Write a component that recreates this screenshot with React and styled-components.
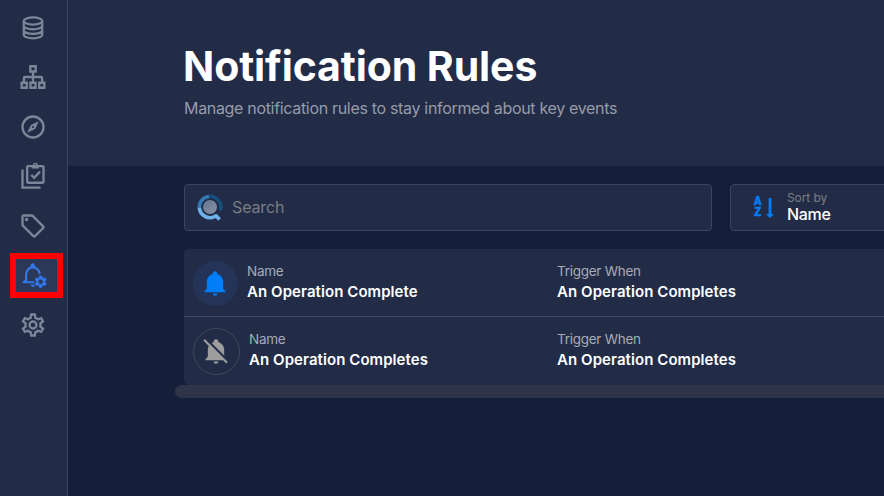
import React from "react";
import styled, { createGlobalStyle } from "styled-components";

const GlobalStyle = createGlobalStyle`
  * { box-sizing: border-box; }
  body {
    margin: 0;
    background: #161f39;
    color: #fff;
    font-family: Inter, "Open Sans", sans-serif;
    overflow: hidden;
  }
`;

const Page = styled.div`
  display: flex;
  height: 100vh;
  overflow: hidden;
`;

const Sidebar = styled.nav`
  flex: none;
  width: 68px;
  padding-top: 3px;
  background: #232c47;
  border-right: 1px solid #3b455f;
  display: flex;
  flex-direction: column;
`;

const NavItem = styled.a`
  position: relative;
  height: 49.5px;
  display: flex;
  align-items: center;
  justify-content: center;
  padding-right: 1px;
  color: ${(p) => (p.$active ? "#3377e6" : "#7d8598")};

  svg {
    display: block;
  }
`;

const Highlight = styled.span`
  position: absolute;
  left: 10px;
  top: 2px;
  width: 53px;
  height: 45px;
  border: 6px solid #fe0000;
  background: #2b3858;
`;

const NavGlyph = styled.span`
  position: relative;
`;

const Main = styled.main`
  flex: 1;
  min-width: 0;
  display: flex;
  flex-direction: column;
`;

const Header = styled.header`
  height: 166px;
  flex: none;
  padding: 41px 0 0 116px;
  background: #232c47;
`;

const Title = styled.h1`
  margin: 0 0 0 -1px;
  font-size: 41px;
  line-height: 50px;
  font-weight: 700;
  letter-spacing: -0.1px;
  white-space: nowrap;
`;

const Subtitle = styled.p`
  margin: 7px 0 0;
  font-size: 16px;
  line-height: 20px;
  letter-spacing: -0.32px;
  color: #969ba9;
  white-space: nowrap;
`;

const Toolbar = styled.div`
  display: flex;
  gap: 18px;
  padding: 18px 0 0 116px;
`;

const Field = styled.div`
  flex: none;
  width: ${(p) => p.$width}px;
  height: 47px;
  display: flex;
  align-items: center;
  padding-left: ${(p) => p.$inset}px;
  gap: ${(p) => p.$gap}px;
  background: #232c47;
  border: 1px solid #3b455f;
  border-radius: 4px;

  svg {
    display: block;
    flex: none;
  }
`;

const Placeholder = styled.span`
  font-size: 16px;
  letter-spacing: -0.13px;
  padding-bottom: 2px;
  color: #797d84;
`;

const SortText = styled.div`
  display: flex;
  flex-direction: column;
`;

const SortLabel = styled.span`
  font-size: 12px;
  line-height: 14px;
  letter-spacing: -0.1px;
  color: #7b7e86;
`;

const SortValue = styled.span`
  font-size: 16px;
  line-height: 19px;
  letter-spacing: -0.3px;
  font-weight: 500;
`;

const List = styled.ul`
  list-style: none;
  margin: 18px 0 0 116px;
  padding: 0;
  background: #232c47;
  border-radius: 5px 0 0 5px;
`;

const Rule = styled.li`
  height: 68px;
  display: grid;
  grid-template-columns: 373px 1fr;
  align-items: center;

  & + & {
    box-shadow: 0 -1px 0 #404a65;
  }
`;

const RuleName = styled.div`
  display: flex;
  align-items: center;
  padding-left: 9px;
  gap: 9px;
`;

const Badge = styled.span`
  flex: none;
  width: ${(p) => (p.$muted ? 47 : 45)}px;
  height: ${(p) => (p.$muted ? 47 : 45)}px;
  border-radius: 50%;
  border: ${(p) => (p.$muted ? "1px solid #404860" : "0")};
  background: ${(p) => (p.$muted ? "transparent" : "#243458")};
  color: ${(p) => (p.$muted ? "#9d9d9d" : "#007df8")};
  display: flex;
  align-items: center;
  justify-content: center;
  padding-right: 1px;
`;

const Cell = styled.div`
  display: flex;
  flex-direction: column;
  white-space: nowrap;
  padding-bottom: 3px;
`;

const Label = styled.span`
  font-size: 13.5px;
  line-height: 18px;
  padding-bottom: 2px;
  letter-spacing: -0.27px;
  color: #a7abb6;
`;

const Value = styled.span`
  font-size: 15px;
  line-height: 20px;
  font-weight: 600;
  letter-spacing: 0.07px;
`;

const ScrollTrack = styled.div`
  height: 13px;
  margin-left: 107px;
  background: #2f3448;
  border-radius: 7px 0 0 7px;
`;

const Icon = ({ size = 28, children, ...rest }) => (
  <svg width={size} height={size} viewBox="0 0 24 24" fill="currentColor" {...rest}>
    {children}
  </svg>
);

const Database = () => (
  <Icon fill="none" stroke="currentColor" strokeWidth="1.9">
    <ellipse cx="12" cy="6" rx="7.9" ry="3.1" />
    <path d="M4.1 6V17.8C4.1 19.5 7.6 20.9 12 20.9S19.9 19.5 19.9 17.8V6M4.1 10C4.1 11.7 7.6 13.1 12 13.1S19.9 11.7 19.9 10M4.1 14C4.1 15.7 7.6 17.1 12 17.1S19.9 15.7 19.9 14" />
  </Icon>
);

const Sitemap = () => (
  <Icon fill="none" stroke="currentColor" strokeWidth="2">
    <path d="M9.7 2.8H14.3V7.3H9.7ZM2.3 16.9H6.7V21.2H2.3ZM9.8 16.9H14.2V21.2H9.8ZM17.3 16.9H21.7V21.2H17.3Z" />
    <path d="M12 7.5V16.9M4.2 16.9V13Q4.2 12 5.2 12H18.8Q19.8 12 19.8 13V16.9" />
  </Icon>
);

const Compass = () => (
  <Icon>
    <path d="M7,17L10.2,10.2L17,7L13.8,13.8L7,17M12,11.1A0.9,0.9 0 0,0 11.1,12A0.9,0.9 0 0,0 12,12.9A0.9,0.9 0 0,0 12.9,12A0.9,0.9 0 0,0 12,11.1M12,2A10,10 0 0,1 22,12A10,10 0 0,1 12,22A10,10 0 0,1 2,12A10,10 0 0,1 12,2M12,4A8,8 0 0,0 4,12A8,8 0 0,0 12,20A8,8 0 0,0 20,12A8,8 0 0,0 12,4Z" />
  </Icon>
);

const Tasks = () => (
  <Icon fill="none" stroke="currentColor" strokeWidth="2">
    <path d="M3 6.5V21.9H18.5" />
    <rect x="7" y="3.5" width="14" height="14.3" rx="0.8" />
    <path d="M10.5 11L13 13.5L18 8.3" />
    <path d="M11 3.2H17V5.6H11Z" fill="currentColor" stroke="none" />
    <circle cx="14" cy="2.8" r="1.5" strokeWidth="1.3" />
  </Icon>
);

const Tag = () => (
  <Icon>
    <path d="M21.41 11.58L12.41 2.58A2 2 0 0 0 11 2H4A2 2 0 0 0 2 4V11A2 2 0 0 0 2.59 12.42L11.59 21.42A2 2 0 0 0 13 22A2 2 0 0 0 14.41 21.41L21.41 14.41A2 2 0 0 0 22 13A2 2 0 0 0 21.41 11.58M13 20L4 11V4H11L20 13M6.5 5A1.5 1.5 0 1 1 5 6.5A1.5 1.5 0 0 1 6.5 5Z" />
  </Icon>
);

const gearOuter =
  "M10,22C9.75,22 9.54,21.82 9.5,21.58L9.13,18.93C8.5,18.68 7.96,18.34 7.44,17.94L4.95,18.95C4.73,19.03 4.46,18.95 4.34,18.73L2.34,15.27C2.21,15.05 2.27,14.78 2.46,14.63L4.57,12.97L4.5,12L4.57,11L2.46,9.37C2.27,9.22 2.21,8.95 2.34,8.73L4.34,5.27C4.46,5.05 4.73,4.96 4.95,5.05L7.44,6.05C7.96,5.66 8.5,5.32 9.13,5.07L9.5,2.42C9.54,2.18 9.75,2 10,2H14C14.25,2 14.46,2.18 14.5,2.42L14.87,5.07C15.5,5.32 16.04,5.66 16.56,6.05L19.05,5.05C19.27,4.96 19.54,5.05 19.66,5.27L21.66,8.73C21.79,8.95 21.73,9.22 21.54,9.37L19.43,11L19.5,12L19.43,13L21.54,14.63C21.73,14.78 21.79,15.05 21.66,15.27L19.66,18.73C19.54,18.95 19.27,19.04 19.05,18.95L16.56,17.95C16.04,18.34 15.5,18.68 14.87,18.93L14.5,21.58C14.46,21.82 14.25,22 14,22H10";

const BellCog = () => (
  <Icon viewBox="0 -1 24 24">
    <path
      d="M3.6 17.2H13.2M6.1 16.8V10.4C6.1 7.2 8.6 4.4 11.8 4.4C15 4.4 17.6 7 17.7 10.2"
      fill="none"
      stroke="currentColor"
      strokeWidth="1.9"
    />
    <path d="M2.9 18.1V17.3L5.2 14.9L6.6 16.6ZM9.8 4.8C9.8 2.4 10.5 1 11.8 1S13.8 2.4 13.8 4.8ZM10 19.2H13.2V21.2C11.4 21.2 10 20.4 10 19.2Z" />
    <g transform="translate(12.35 10.5) scale(0.52)">
      <path
        fillRule="evenodd"
        d={gearOuter + "ZM12 8.4A3.6 3.6 0 1 0 12 15.6A3.6 3.6 0 1 0 12 8.4Z"}
      />
    </g>
  </Icon>
);

const Cog = () => (
  <Icon>
    <path
      d={
        "M12,8A4,4 0 0,1 16,12A4,4 0 0,1 12,16A4,4 0 0,1 8,12A4,4 0 0,1 12,8M12,10A2,2 0 0,0 10,12A2,2 0 0,0 12,14A2,2 0 0,0 14,12A2,2 0 0,0 12,10" +
        gearOuter +
        "M11.25,4L10.88,6.61C9.68,6.86 8.62,7.5 7.85,8.39L5.44,7.35L4.69,8.6L6.8,10.15C6.4,11.37 6.4,12.64 6.8,13.87L4.68,15.43L5.43,16.68L7.86,15.64C8.63,16.54 9.68,17.14 10.87,17.38L11.24,20H12.76L13.13,17.39C14.32,17.14 15.37,16.54 16.14,15.64L18.57,16.68L19.32,15.43L17.2,13.88C17.6,12.64 17.6,11.37 17.2,10.15L19.31,8.6L18.56,7.35L16.15,8.39C15.38,7.5 14.32,6.86 13.12,6.62L12.75,4H11.25Z"
      }
    />
  </Icon>
);

const Bell = () => (
  <Icon>
    <path d="M21,19V20H3V19L5,17V11C5,7.9 7.03,5.17 10,4.29C10,4.19 10,4.1 10,4A2,2 0 0,1 12,2A2,2 0 0,1 14,4C14,4.1 14,4.19 14,4.29C16.97,5.17 19,7.9 19,11V17L21,19M14,21A2,2 0 0,1 12,23A2,2 0 0,1 10,21" />
  </Icon>
);

const BellOff = () => (
  <Icon>
    <path d="M20.84,22.73L18.11,20H3V19L5,17V11C5,9.86 5.29,8.73 5.83,7.72L1.11,3L2.39,1.73L22.11,21.46L20.84,22.73M19,15.8V11C19,7.9 16.97,5.17 14,4.29C14,4.19 14,4.1 14,4A2,2 0 0,0 12,2A2,2 0 0,0 10,4C10,4.1 10,4.19 10,4.29C9.39,4.47 8.8,4.74 8.26,5.09L19,15.8M12,23A2,2 0 0,0 14,21H10A2,2 0 0,0 12,23Z" />
  </Icon>
);

const SearchMark = () => (
  <svg width="28" height="28" viewBox="0 0 28 28" fill="none" strokeWidth="3.6">
    <defs>
      <linearGradient id="lens" x1="0" y1="0" x2="1" y2="1">
        <stop offset="0" stopColor="#667691" />
        <stop offset="1" stopColor="#8791a5" />
      </linearGradient>
    </defs>
    <circle cx="14" cy="13" r="7" fill="url(#lens)" />
    <path d="M13 2.5A10.6 10.6 0 0 1 24.2 16.5" stroke="#174f7c" />
    <path d="M3.4 13.6A10.6 10.6 0 0 1 13 2.5" stroke="#3479b4" />
    <path
      d="M3.4 13.6A10.6 10.6 0 0 0 18.5 22.6L20 21.8L23.6 25.6"
      stroke="#6fb2ea"
      strokeLinejoin="round"
    />
  </svg>
);

const SortGlyph = styled.span`
  display: flex;
  align-items: center;
  gap: 4px;
  height: 22px;
  color: #007df8;
`;

const SortLetters = styled.span`
  width: 8px;
  font: 700 12.5px/11px "Liberation Mono", monospace;
  -webkit-text-stroke: 0.5px currentColor;
  white-space: pre;
`;

const SortMark = () => (
  <SortGlyph>
    <SortLetters>{"A\nZ"}</SortLetters>
    <svg width="8" height="20" viewBox="0 0 8 20" fill="currentColor">
      <path d="M2.6 0H5.4V16H8L4 20L0 16H2.6Z" />
    </svg>
  </SortGlyph>
);

const navItems = [
  { id: "data", Glyph: Database },
  { id: "topology", Glyph: Sitemap },
  { id: "explore", Glyph: Compass },
  { id: "tasks", Glyph: Tasks },
  { id: "tags", Glyph: Tag },
  { id: "notifications", Glyph: BellCog, active: true },
  { id: "settings", Glyph: Cog },
];

const rules = [
  { name: "An Operation Complete", trigger: "An Operation Completes", enabled: true },
  { name: "An Operation Completes", trigger: "An Operation Completes", enabled: false },
];

export default function App() {
  return (
    <>
      <GlobalStyle />
      <Page>
        <Sidebar>
          {navItems.map(({ id, Glyph, active }) => (
            <NavItem key={id} $active={active}>
              {active && <Highlight />}
              <NavGlyph>
                <Glyph />
              </NavGlyph>
            </NavItem>
          ))}
        </Sidebar>
        <Main>
          <Header>
            <Title>Notification Rules</Title>
            <Subtitle>Manage notification rules to stay informed about key events</Subtitle>
          </Header>
          <Toolbar>
            <Field $width={528} $inset={11} $gap={8}>
              <SearchMark />
              <Placeholder>Search</Placeholder>
            </Field>
            <Field $width={240} $inset={23} $gap={13}>
              <SortMark />
              <SortText>
                <SortLabel>Sort by</SortLabel>
                <SortValue>Name</SortValue>
              </SortText>
            </Field>
          </Toolbar>
          <List>
            {rules.map((rule, i) => (
              <Rule key={i}>
                <RuleName>
                  <Badge $muted={!rule.enabled}>{rule.enabled ? <Bell /> : <BellOff />}</Badge>
                  <Cell>
                    <Label>Name</Label>
                    <Value>{rule.name}</Value>
                  </Cell>
                </RuleName>
                <Cell>
                  <Label>Trigger When</Label>
                  <Value>{rule.trigger}</Value>
                </Cell>
              </Rule>
            ))}
          </List>
          <ScrollTrack />
        </Main>
      </Page>
    </>
  );
}
